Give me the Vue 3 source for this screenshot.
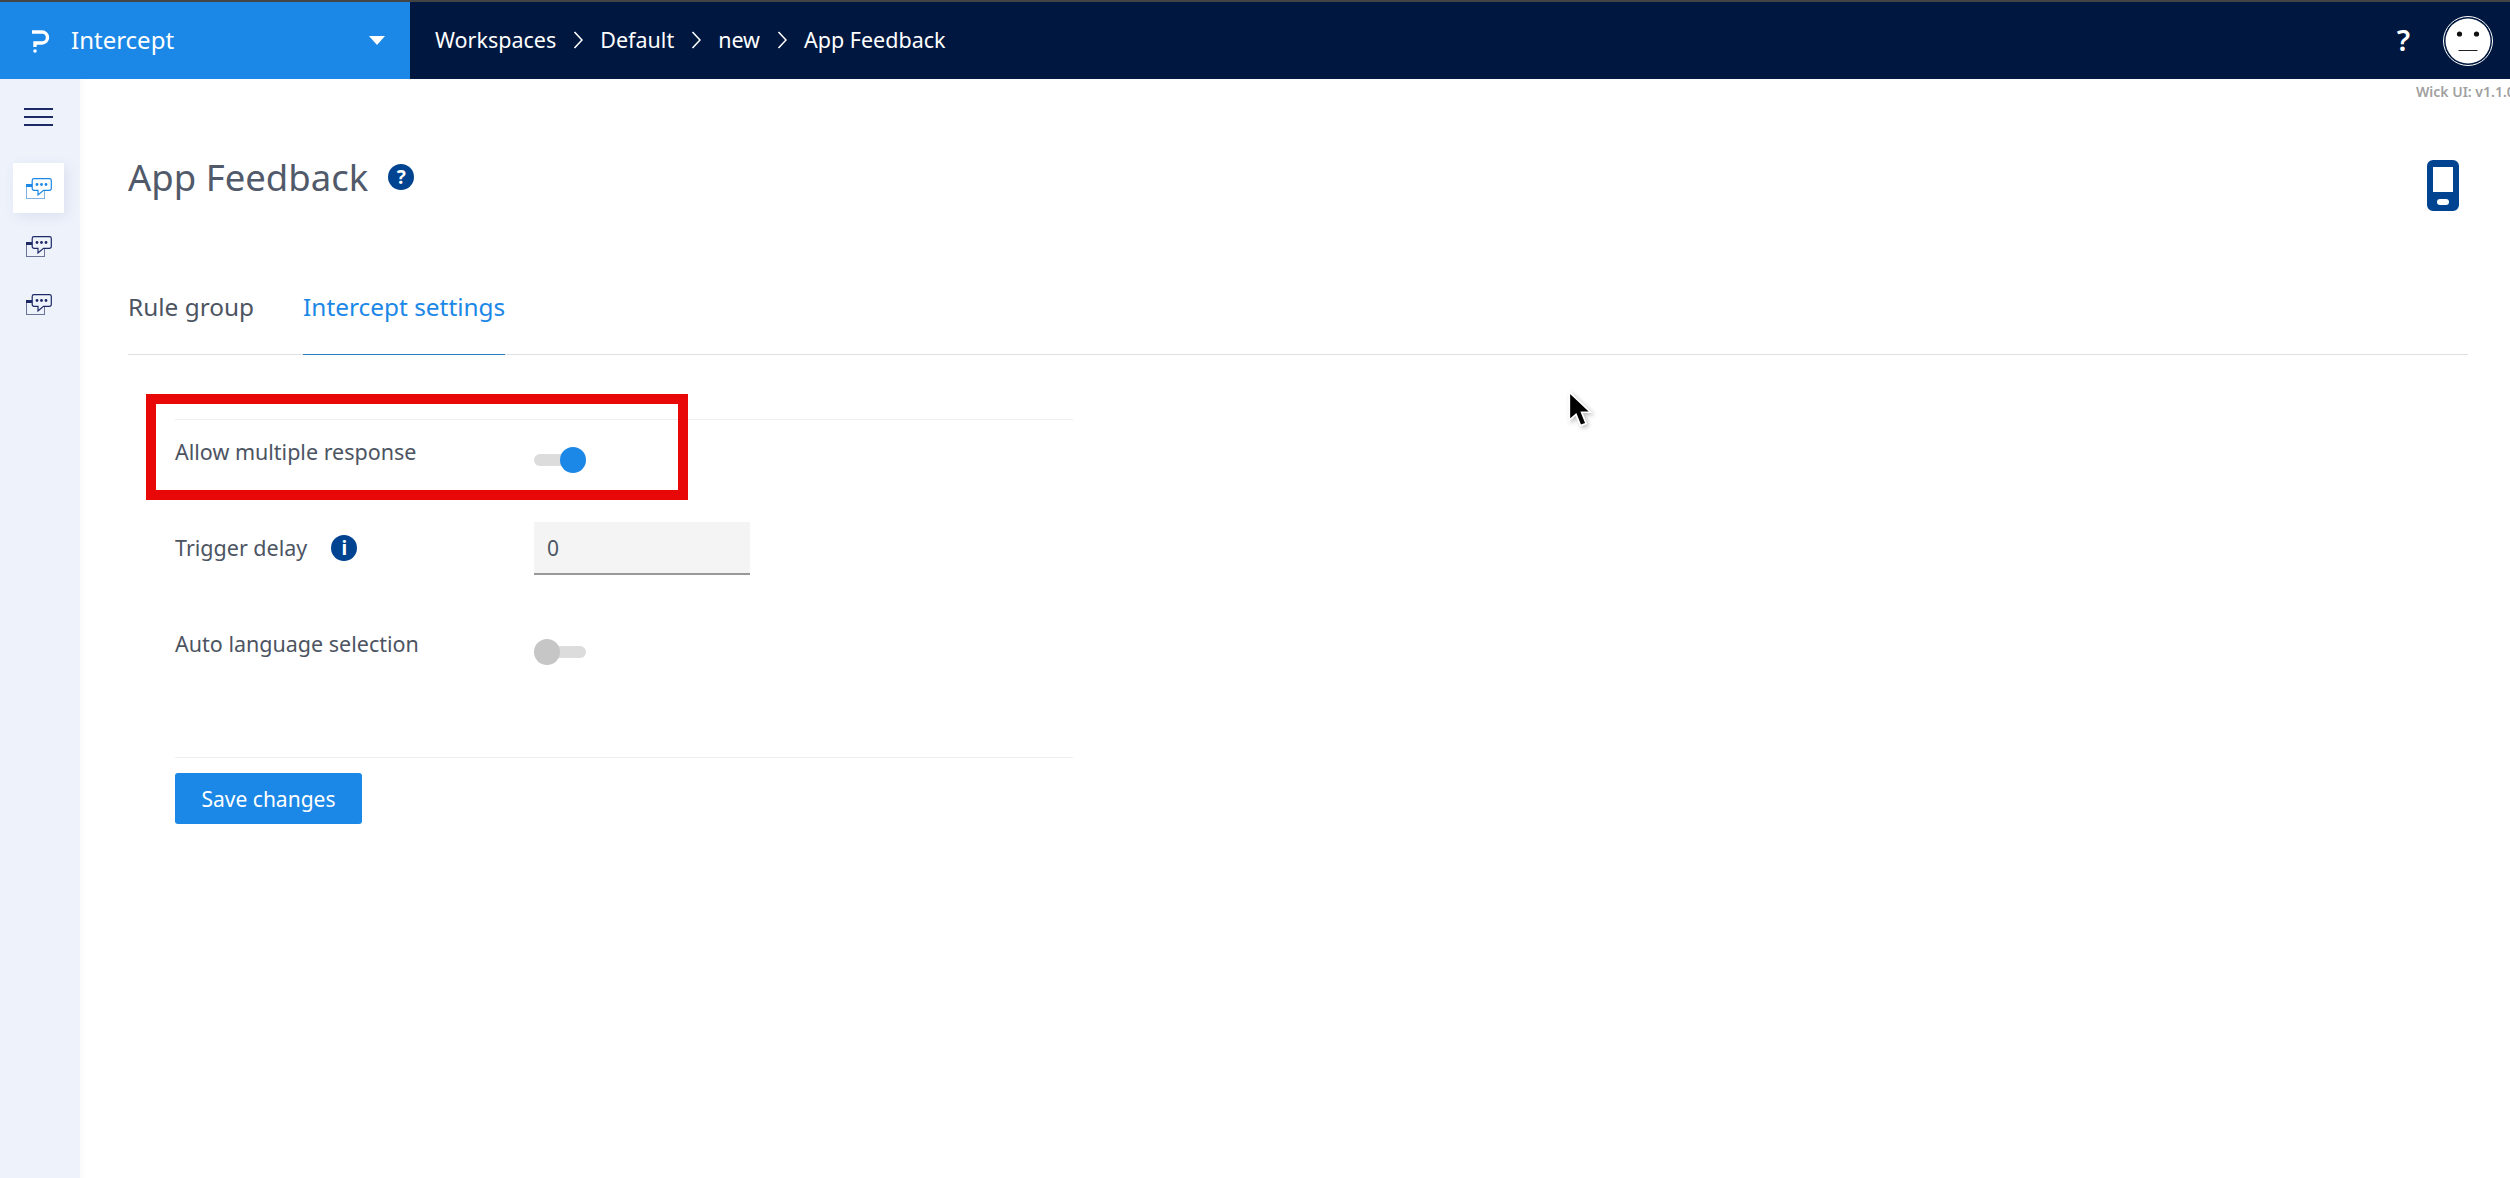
<template>
  <div class="app">
    <header class="topbar">
      <div class="product">
        <svg class="logo" width="20" height="24" viewBox="0 0 20 24">
          <path d="M1 3h10a5 5 0 0 1 0 11H4v4" fill="none" stroke="#fff" stroke-width="3.4" />
          <circle cx="4" cy="22" r="1.8" fill="#fff" />
        </svg>
        <span class="product-name">Intercept</span>
        <span class="caret"></span>
      </div>
      <nav class="crumbs">
        <template v-for="(crumb, i) in crumbs" :key="crumb">
          <span>{{ crumb }}</span>
          <svg v-if="i < crumbs.length - 1" class="chevron" width="10" height="20" viewBox="0 0 10 20">
            <path d="M1.500 2l7.500 8-7.500 8" fill="none" stroke="#fff" stroke-width="1.600" />
          </svg>
        </template>
      </nav>
      <span class="help">?</span>
      <span class="avatar">
        <svg width="50" height="50" viewBox="0 0 50 50">
          <circle cx="25" cy="25" r="24.500" fill="#00173f" stroke="#fff" stroke-width="1" />
          <circle cx="25" cy="25" r="22.500" fill="#fff" />
          <circle cx="16.500" cy="18" r="2.600" fill="#111" />
          <circle cx="33.500" cy="18" r="2.600" fill="#111" />
          <path d="M15.500 34.500h19" stroke="#222" stroke-width="1" />
        </svg>
      </span>
    </header>

    <div class="body">
      <aside class="sidebar">
        <div class="burger"><i></i><i></i><i></i></div>
        <div
          v-for="(item, i) in navItems"
          :key="item"
          :class="['nav-item', { active: i === 0 }]"
        >
          <svg width="26" height="21" viewBox="0 0 26 21">
            <rect x="0.500" y="6.500" width="18" height="14" fill="none" :stroke="i === 0 ? '#7fb0e6' : '#6b7399'" />
            <rect x="0" y="6" width="8" height="3" :fill="i === 0 ? '#1b87e6' : '#1d2a66'" />
            <path d="M8 .7h15.500a1.800 1.800 0 0 1 1.800 1.800v8a1.800 1.800 0 0 1-1.800 1.800h-6L12 17v-4.700H8a1.800 1.800 0 0 1-1.800-1.800v-8A1.800 1.800 0 0 1 8 .7z" :fill="i === 0 ? '#fff' : '#eef2fb'" :stroke="i === 0 ? '#1b87e6' : '#1d2a66'" stroke-width="1.200" />
            <circle cx="11" cy="6.500" r="1.400" :fill="i === 0 ? '#1b87e6' : '#1d2a66'" />
            <circle cx="15.500" cy="6.500" r="1.400" :fill="i === 0 ? '#1b87e6' : '#1d2a66'" />
            <circle cx="20" cy="6.500" r="1.400" :fill="i === 0 ? '#1b87e6' : '#1d2a66'" />
          </svg>
        </div>
      </aside>

      <main class="content">
        <span class="version">Wick UI: v1.1.0</span>
        <div class="page-head">
          <h1 class="title">App Feedback</h1>
          <span class="round-icon title-help">?</span>
          <svg class="phone" width="32" height="51" viewBox="0 0 32 51">
            <path fill-rule="evenodd" d="M6 0h20a6 6 0 0 1 6 6v39a6 6 0 0 1-6 6H6a6 6 0 0 1-6-6V6a6 6 0 0 1 6-6zm0 7v25h20V7zm7 32a3 3 0 0 0 0 6h6a3 3 0 0 0 0-6z" fill="#004491" />
          </svg>
        </div>

        <div class="tabs">
          <span class="tab">Rule group</span>
          <span class="tab active">Intercept settings</span>
        </div>

        <form class="settings" @submit.prevent>
          <div class="row row-one">
            <label class="label">Allow multiple response</label>
            <span class="toggle on"></span>
          </div>
          <div class="row row-two">
            <label class="label">Trigger delay<span class="round-icon info">i</span></label>
            <input class="field" :value="0" />
          </div>
          <div class="row row-three">
            <label class="label">Auto language selection</label>
            <span class="toggle"></span>
          </div>
          <div class="actions">
            <button class="save" type="submit">Save changes</button>
          </div>
        </form>
      </main>
    </div>

    <!-- annotation and pointer burnt into the screenshot -->
    <div class="highlight"></div>
    <svg class="pointer" width="25" height="38" viewBox="0 0 22 34">
      <path d="M1 1v25l6-5 4 10 5-2-4-10h8z" fill="#000" stroke="#fff" stroke-width="1.500" />
    </svg>
  </div>
</template>

<script setup>
const crumbs = ['Workspaces', 'Default', 'new', 'App Feedback']
const navItems = ['one', 'two', 'three']
</script>

<style>
html, body {
  margin: 0;
  overflow: hidden;
  background: #fff;
}
</style>

<style scoped>
.app {
  position: relative;
  width: 2510px;
  height: 1178px;
  overflow: hidden;
  display: flex;
  flex-direction: column;
  font-family: "Noto Sans", "Open Sans", sans-serif;
  color: #4c5462;
}

.topbar {
  height: 77px;
  flex: none;
  display: flex;
  align-items: center;
  background: #00173f;
  border-top: 2px solid #444;
  color: #fff;
}

.product {
  width: 410px;
  height: 100%;
  display: flex;
  align-items: center;
  padding: 0 25px 0 31px;
  box-sizing: border-box;
  background: #1b87e6;
}

.logo {
  margin-right: 20px;
}

.product-name {
  font-size: 24px;
  flex: 1;
  margin-bottom: 3px;
}

.caret {
  border-left: 8px solid transparent;
  border-right: 8px solid transparent;
  border-top: 9px solid #fff;
}

.crumbs {
  display: flex;
  align-items: center;
  gap: 17px;
  margin: 0 0 2px 25px;
  font-size: 21.500px;
  flex: 1;
}

.help {
  font-size: 29px;
  font-weight: 600;
  margin: 0 33px 2px 0;
}

.avatar {
  width: 50px;
  height: 50px;
  margin-right: 17px;
}

.body {
  flex: 1;
  display: flex;
  min-height: 0;
}

.sidebar {
  width: 80px;
  flex: none;
  box-sizing: border-box;
  padding-right: 3px;
  background: #eef2fb;
  display: flex;
  flex-direction: column;
  align-items: center;
}

.burger {
  width: 29px;
  height: 18px;
  margin: 29px 0 37px;
  display: flex;
  flex-direction: column;
  justify-content: space-between;
}

.burger i {
  height: 2px;
  background: #1d2a66;
}

.nav-item {
  width: 51px;
  height: 50px;
  margin-bottom: 8px;
  display: flex;
  align-items: center;
  justify-content: center;
}

.nav-item.active {
  background: #fff;
  box-shadow: 3px 3px 12px rgba(60, 80, 140, 0.1);
}

.content {
  position: relative;
  flex: 1;
  padding: 79px 42px 0 48px;
  box-shadow: inset 8px 0 8px -8px rgba(60, 80, 140, 0.06);
}

.version {
  position: absolute;
  top: 3px;
  left: 2336px;
  white-space: nowrap;
  font-size: 14px;
  font-weight: 600;
  color: #a0a0a0;
}

.page-head {
  display: flex;
  align-items: flex-start;
  height: 53px;
}

.title {
  margin: 0;
  font-size: 36.500px;
  line-height: 38px;
  font-weight: 400;
  color: #515a6a;
}

.round-icon {
  width: 26px;
  height: 26px;
  border-radius: 50%;
  background: #004491;
  color: #fff;
  display: inline-flex;
  align-items: center;
  justify-content: center;
  font-size: 19px;
  font-weight: 700;
}

.title-help {
  margin: 6px 0 0 20px;
}

.phone {
  margin: 2px 9px 0 auto;
}

.tabs {
  display: flex;
  gap: 49px;
  margin-top: 81px;
  border-bottom: 1px solid #dddfe2;
}

.tab {
  font-size: 24.400px;
  line-height: 30px;
  padding-bottom: 32px;
  margin-bottom: -1px;
}

.tab.active {
  color: #1b87e6;
  border-bottom: 1px solid #2a80c0;
}

.settings {
  width: 898px;
  margin: 64px 0 0 47px;
  border-top: 1px solid #eeeeee;
}

.row {
  display: flex;
  align-items: flex-start;
}

.row-one {
  height: 102px;
}

.row-two {
  height: 90px;
}

.row-three {
  height: 145px;
}

.label {
  width: 359px;
  flex: none;
  margin-top: 17px;
  font-size: 21.500px;
  line-height: 30px;
  display: flex;
  align-items: center;
}

.row-two .label {
  margin-top: 11px;
}

.info {
  margin-left: 24px;
}

.toggle {
  position: relative;
  width: 52px;
  height: 12px;
  margin-top: 34px;
  border-radius: 6px;
  background: #dcdcdc;
}

.toggle::after {
  content: "";
  position: absolute;
  top: -7px;
  left: 0;
  width: 26px;
  height: 26px;
  border-radius: 50%;
  background: #c6c6c6;
}

.toggle.on::after {
  left: 26px;
  background: #1b87e6;
}

.field {
  width: 216px;
  height: 53px;
  box-sizing: border-box;
  padding: 0 13px;
  border: 0;
  border-bottom: 2px solid #999;
  background: #f4f4f4;
  font: 21px "Noto Sans", "Open Sans", sans-serif;
  color: #4c5462;
  outline: none;
}

.actions {
  border-top: 1px solid #eeeeee;
  padding-top: 15px;
}

.save {
  width: 187px;
  height: 51px;
  padding: 0;
  border: 0;
  border-radius: 3px;
  background: #1b87e6;
  color: #fff;
  font: 21px "Noto Sans", "Open Sans", sans-serif;
}

.highlight {
  position: absolute;
  left: 146px;
  top: 394px;
  width: 522px;
  height: 86px;
  border: 10px solid #e80808;
}

.pointer {
  position: absolute;
  left: 1568px;
  top: 391px;
  filter: drop-shadow(2px 2px 2px rgba(0, 0, 0, 0.25));
}
</style>
